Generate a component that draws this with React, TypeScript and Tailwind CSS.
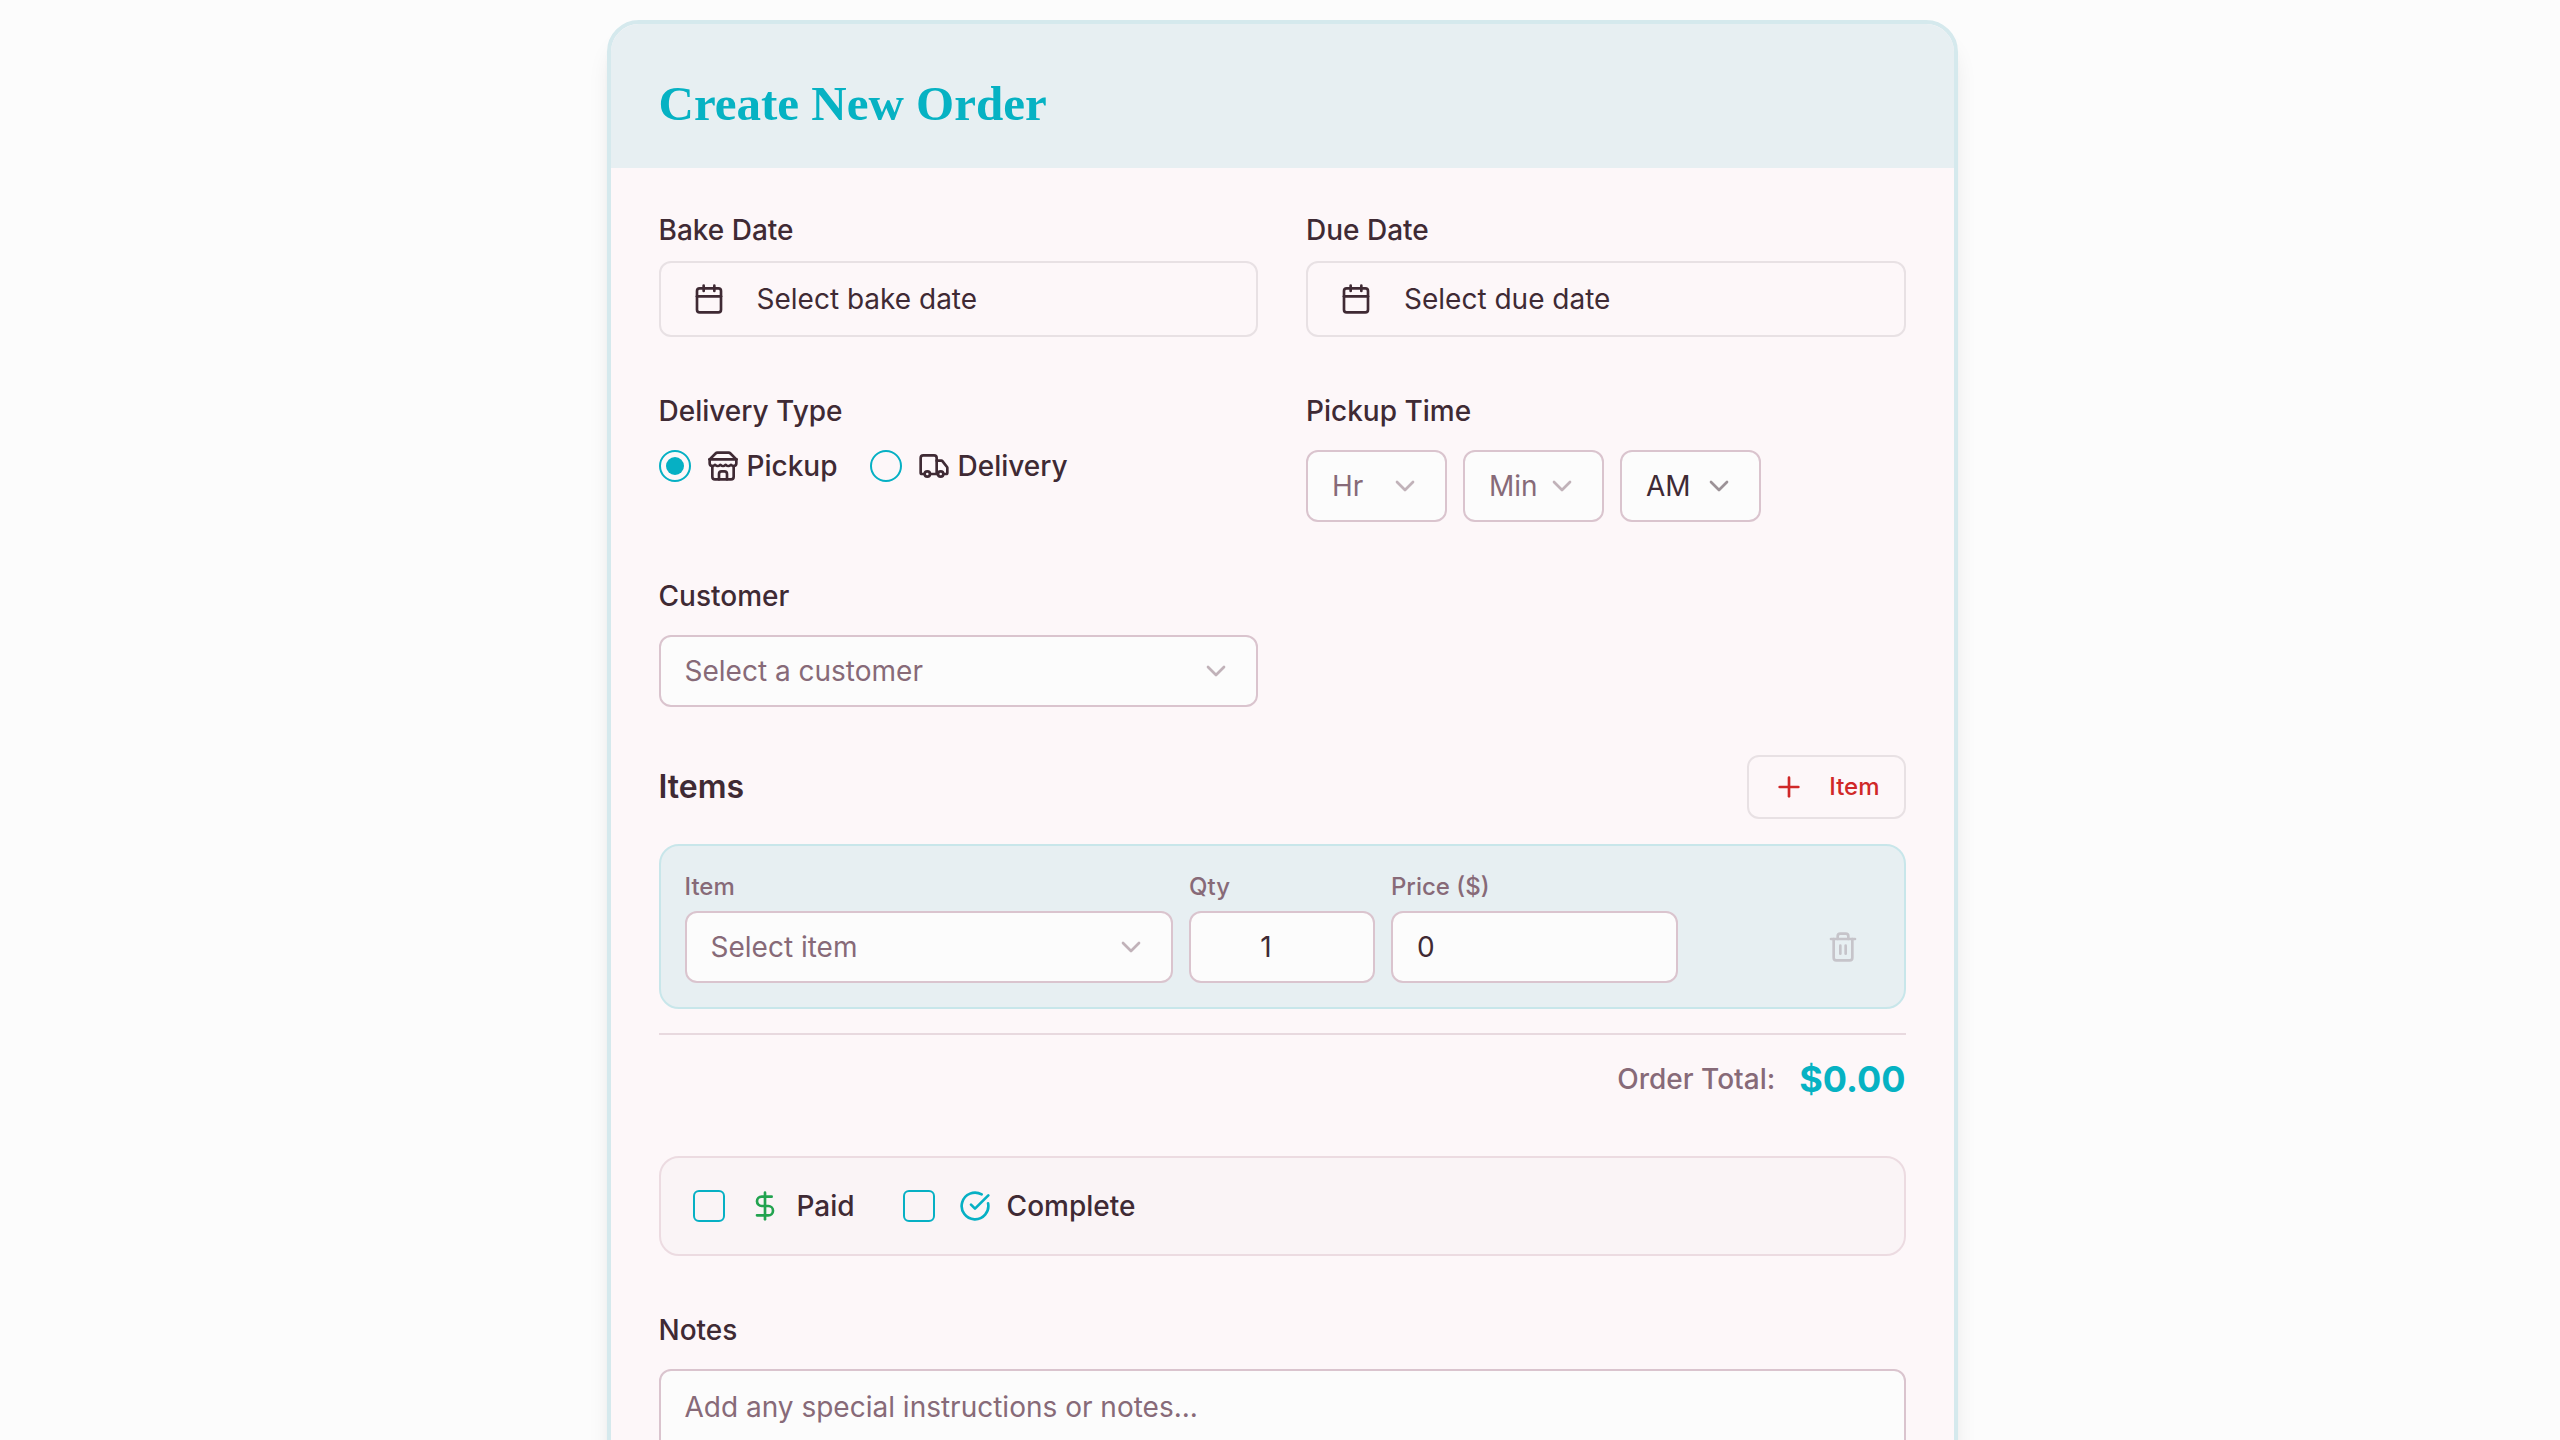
import React, { useId, useState } from "react";
import { Calendar, ChevronDown, CircleCheckBig, DollarSign, Plus, Trash2, Truck } from "lucide-react";

const labelClass = "block text-[28px] leading-[29px] font-medium text-[#3f2a34]";

function StoreIcon() {
  return (
    <svg
      aria-hidden="true"
      viewBox="0 0 24 24"
      fill="none"
      stroke="currentColor"
      strokeWidth="2"
      strokeLinecap="round"
      strokeLinejoin="round"
      className="size-8"
    >
      <path d="m2 7 4.41-4.41A2 2 0 0 1 7.83 2h8.34a2 2 0 0 1 1.42.59L22 7" />
      <path d="M4 12v8a2 2 0 0 0 2 2h12a2 2 0 0 0 2-2v-8" />
      <path d="M15 22v-4a2 2 0 0 0-2-2h-2a2 2 0 0 0-2 2v4" />
      <path d="M2 7h20" />
      <path d="M22 7v3a2 2 0 0 1-2 2a2.7 2.7 0 0 1-1.59-.63.7.7 0 0 0-.82 0A2.7 2.7 0 0 1 16 12a2.7 2.7 0 0 1-1.59-.63.7.7 0 0 0-.82 0A2.7 2.7 0 0 1 12 12a2.7 2.7 0 0 1-1.59-.63.7.7 0 0 0-.82 0A2.7 2.7 0 0 1 8 12a2.7 2.7 0 0 1-1.59-.63.7.7 0 0 0-.82 0A2.7 2.7 0 0 1 4 12a2 2 0 0 1-2-2V7" />
    </svg>
  );
}

function Picker({
  id,
  label,
  options,
  className,
  placeholder = true,
}: {
  id: string;
  label?: string;
  options: string[];
  className: string;
  placeholder?: boolean;
}) {
  return (
    <div className={`grid items-center ${className}`}>
      <select
        id={id}
        aria-label={label}
        className={`col-start-1 row-start-1 h-[72px] w-full appearance-none rounded-xl border-2 border-[#dac4ce] bg-[#fcfcfc] pl-6 pr-14 text-[28px] leading-10 ${
          placeholder ? "text-[#876a78]" : "text-[#3f2a34]"
        }`}
      >
        {options.map((option) => (
          <option key={option}>{option}</option>
        ))}
      </select>
      <ChevronDown
        aria-hidden="true"
        className={`pointer-events-none col-start-1 row-start-1 mr-[26px] size-8 justify-self-end opacity-50 ${
          placeholder ? "text-[#876a78]" : "text-[#3f2a34]"
        }`}
      />
    </div>
  );
}

function DateField({ label, prompt }: { label: string; prompt: string }) {
  const id = useId();
  return (
    <div className="flex flex-col gap-4">
      <label htmlFor={id} className={labelClass}>
        {label}
      </label>
      <button
        id={id}
        type="button"
        className="flex h-[76px] w-full items-center gap-8 rounded-xl border-2 border-[#e8e1e4] px-8 text-left text-[28px] leading-10 text-[#3f2a34]"
      >
        <Calendar aria-hidden="true" className="size-8" />
        {prompt}
      </button>
    </div>
  );
}

function RadioOption({
  id,
  label,
  icon,
  checked,
  onSelect,
}: {
  id: string;
  label: string;
  icon: React.ReactNode;
  checked: boolean;
  onSelect: () => void;
}) {
  return (
    <div className="flex items-center gap-4">
      <input
        id={id}
        type="radio"
        name="delivery-type"
        checked={checked}
        onChange={onSelect}
        className="grid size-8 appearance-none place-items-center rounded-full border-2 border-[#06b0c4] before:size-[18px] before:rounded-full before:content-[''] checked:before:bg-[#06b0c4]"
      />
      <label htmlFor={id} className="flex items-center gap-2 text-[28px] leading-8 font-medium text-[#3f2a34]">
        {icon}
        {label}
      </label>
    </div>
  );
}

function StatusOption({ id, label, icon }: { id: string; label: string; icon: React.ReactNode }) {
  return (
    <div className="flex items-center gap-6">
      <input
        id={id}
        type="checkbox"
        className="size-8 appearance-none rounded-md border-2 border-[#06b0c4] checked:bg-[#06b0c4]"
      />
      <label htmlFor={id} className="flex items-center gap-4 text-[28px] leading-8 font-medium text-[#3f2a34]">
        {icon}
        {label}
      </label>
    </div>
  );
}

const itemLabel = "block text-2xl leading-[33px] font-medium text-[#876a78]";
const numberInput =
  "h-[72px] w-full rounded-xl border-2 border-[#dac4ce] bg-[#fcfcfc] px-6 text-[28px] leading-10 text-[#3f2a34] [appearance:textfield]";

export default function App() {
  const [delivery, setDelivery] = useState("pickup");
  return (
    <main className="h-screen overflow-hidden bg-[#fcfcfc] pt-5 pr-6 pl-7 font-['Inter',sans-serif]">
      <form className="mx-auto w-full max-w-[1351px] overflow-hidden rounded-[32px] border-4 border-[#d5e9ed] bg-[#fdf7f9] shadow-xl">
        <header className="bg-[#e7eff2] px-12 pt-14 pb-10">
          <h1 className="font-['Liberation_Serif',serif] text-[49px] leading-12 font-bold text-[#06b2c3]">
            Create New Order
          </h1>
        </header>

        <div className="flex flex-col px-12 pt-12 pb-12">
          <div className="grid grid-cols-2 gap-12">
            <DateField label="Bake Date" prompt="Select bake date" />
            <DateField label="Due Date" prompt="Select due date" />

            <fieldset className="pt-3">
              <legend className="contents">
                <span className={labelClass}>Delivery Type</span>
              </legend>
              <div className="mt-6 flex items-center gap-8">
                <RadioOption
                  id="pickup"
                  label="Pickup"
                  icon={<StoreIcon />}
                  checked={delivery === "pickup"}
                  onSelect={() => setDelivery("pickup")}
                />
                <RadioOption
                  id="delivery"
                  label="Delivery"
                  icon={<Truck aria-hidden="true" className="size-8" />}
                  checked={delivery === "delivery"}
                  onSelect={() => setDelivery("delivery")}
                />
              </div>
            </fieldset>

            <div className="pt-3">
              <label htmlFor="hour" className={labelClass}>
                Pickup Time
              </label>
              <div className="mt-6 flex gap-4">
                <Picker id="hour" options={["Hr"]} className="w-[141px]" />
                <Picker id="minute" label="Minute" options={["Min"]} className="w-[141px]" />
                <Picker id="period" label="AM or PM" options={["AM", "PM"]} className="w-[141px]" placeholder={false} />
              </div>
            </div>

            <div className="pt-3">
              <label htmlFor="customer" className={labelClass}>
                Customer
              </label>
              <Picker id="customer" options={["Select a customer"]} className="mt-6" />
            </div>
          </div>

          <section className="mt-12">
            <div className="flex items-center justify-between">
              <h2 className="text-[32px] leading-10 font-semibold text-[#3f2a34]">Items</h2>
              <button
                type="button"
                className="flex h-16 items-center gap-6 rounded-xl border-2 border-[#e8e1e4] px-6 text-2xl font-medium text-[#d02828]"
              >
                <Plus aria-hidden="true" className="size-8" />
                Item
              </button>
            </div>

            <div className="mt-[25px] grid grid-cols-12 items-end gap-4 rounded-[20px] border-2 border-[#c8e6ea] bg-[#e7eff2] p-6">
              <div className="col-span-5 flex flex-col gap-2">
                <label htmlFor="item" className={itemLabel}>
                  Item
                </label>
                <Picker id="item" options={["Select item"]} className="" />
              </div>
              <div className="col-span-2 flex flex-col gap-2">
                <label htmlFor="qty" className={itemLabel}>
                  Qty
                </label>
                <input id="qty" type="text" inputMode="numeric" defaultValue="1" className={`${numberInput} pr-14 text-center`} />
              </div>
              <div className="col-span-3 flex flex-col gap-2">
                <label htmlFor="price" className={itemLabel}>
                  Price ($)
                </label>
                <input id="price" type="text" inputMode="decimal" defaultValue="0" className={numberInput} />
              </div>
              <div className="col-span-2 flex justify-end">
                <button
                  type="button"
                  aria-label="Remove item"
                  disabled
                  className="flex size-[72px] items-center justify-center text-[#c6c4ca]"
                >
                  <Trash2 aria-hidden="true" className="size-8" />
                </button>
              </div>
            </div>

            <div className="mt-6 flex items-center justify-end gap-6 border-t-2 border-[#e8d9df] pt-6">
              <span className="text-[28px] leading-[41px] font-medium text-[#876a78]">Order Total:</span>
              <span className="text-4xl leading-[41px] font-bold text-[#06b2c3]">$0.00</span>
            </div>
          </section>

          <div className="mt-14 flex items-center gap-12 rounded-[20px] border-2 border-[#ecdbe1] bg-[#faf4f6] p-8">
            <StatusOption
              id="paid"
              label="Paid"
              icon={<DollarSign aria-hidden="true" className="size-8 text-[#22a34f]" />}
            />
            <StatusOption
              id="complete"
              label="Complete"
              icon={<CircleCheckBig aria-hidden="true" className="size-8 text-[#06b0c4]" />}
            />
          </div>

          <div className="mt-15">
            <label htmlFor="notes" className={labelClass}>
              Notes
            </label>
            <textarea
              id="notes"
              rows={4}
              placeholder="Add any special instructions or notes..."
              className="mt-6 block w-full resize-none rounded-xl border-2 border-[#dac4ce] bg-[#fcfcfc] px-6 py-4 text-[28px] leading-10 text-[#3f2a34] placeholder:text-[#876a78]"
            />
          </div>
        </div>
      </form>
    </main>
  );
}
